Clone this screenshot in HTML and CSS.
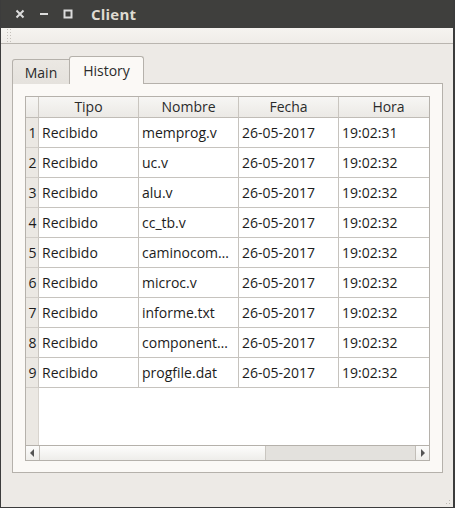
FILE: index.html
```html
<!DOCTYPE html>
<html>
<head>
<meta charset="utf-8">
<link rel="stylesheet" href="styles.css">
</head>
<body>
<div class="window">
  <div class="titlebar">
    <div class="wbtns">
      <svg class="wbtn" width="10" height="10" viewBox="0 0 10 10"><path d="M1.5 1.5 L8.5 8.5 M8.5 1.5 L1.5 8.5" stroke="#dcdcdc" stroke-width="2"/></svg>
      <svg class="wbtn" width="10" height="10" viewBox="0 0 10 10"><path d="M1 5 H9" stroke="#dcdcdc" stroke-width="2"/></svg>
      <svg class="wbtn" width="10" height="10" viewBox="0 0 10 10"><rect x="1.5" y="1.5" width="7" height="7" fill="none" stroke="#dcdcdc" stroke-width="2"/></svg>
    </div>
    <span class="wtitle">Client</span>
  </div>
  <div class="toolbar"><div class="grip"></div></div>
  <div class="content">
    <div class="tabbar">
      <div class="tab">Main</div>
      <div class="tab active">History</div>
    </div>
    <div class="panel">
      <div class="table">
        <div class="grid">
          <div class="corner"></div>
          <div class="hcell">Tipo</div>
          <div class="hcell">Nombre</div>
          <div class="hcell">Fecha</div>
          <div class="hcell">Hora</div>

          <div class="vcell">1</div><div class="cell">Recibido</div><div class="cell">memprog.v</div><div class="cell">26-05-2017</div><div class="cell">19:02:31</div>
          <div class="vcell">2</div><div class="cell">Recibido</div><div class="cell">uc.v</div><div class="cell">26-05-2017</div><div class="cell">19:02:32</div>
          <div class="vcell">3</div><div class="cell">Recibido</div><div class="cell">alu.v</div><div class="cell">26-05-2017</div><div class="cell">19:02:32</div>
          <div class="vcell">4</div><div class="cell">Recibido</div><div class="cell">cc_tb.v</div><div class="cell">26-05-2017</div><div class="cell">19:02:32</div>
          <div class="vcell">5</div><div class="cell">Recibido</div><div class="cell">caminocom…</div><div class="cell">26-05-2017</div><div class="cell">19:02:32</div>
          <div class="vcell">6</div><div class="cell">Recibido</div><div class="cell">microc.v</div><div class="cell">26-05-2017</div><div class="cell">19:02:32</div>
          <div class="vcell">7</div><div class="cell">Recibido</div><div class="cell">informe.txt</div><div class="cell">26-05-2017</div><div class="cell">19:02:32</div>
          <div class="vcell">8</div><div class="cell">Recibido</div><div class="cell">component…</div><div class="cell">26-05-2017</div><div class="cell">19:02:32</div>
          <div class="vcell">9</div><div class="cell">Recibido</div><div class="cell">progfile.dat</div><div class="cell">26-05-2017</div><div class="cell">19:02:32</div>
        </div>
        <div class="filler"><div class="vfill"></div></div>
        <div class="hscroll">
          <div class="sbtn"><span class="arrow left"></span></div>
          <div class="thumb"></div>
          <div class="trough"></div>
          <div class="sbtn rbtn"><span class="arrow right"></span></div>
        </div>
      </div>
    </div>
  </div>
  <div class="sizegrip"></div>
</div>
</body>
</html>
```

FILE: styles.css
```css
* { box-sizing: border-box; }
html, body { margin: 0; padding: 0; }
body {
  width: 455px;
  height: 508px;
  overflow: hidden;
  font-family: "Open Sans", "Noto Sans", sans-serif;
  font-size: 14px;
  color: #1c1c1c;
  background: #3c3c3c;
}
.window {
  position: relative;
  width: 455px;
  height: 508px;
  background: #edeae6;
  border-left: 1px solid #3c3c3c;
  border-right: 2px solid #3c3c3c;
  border-bottom: 1px solid #3c3c3c;
  display: flex;
  flex-direction: column;
}
.titlebar {
  height: 28px;
  background: #3f3f3d;
  display: flex;
  align-items: center;
  flex-shrink: 0;
}
.wbtns {
  display: flex;
  gap: 14px;
  padding-left: 14px;
  align-items: center;
}
.wbtn { display: block; }
.wtitle {
  margin-left: 18px;
  color: #dfdbd2;
  font-weight: bold;
  font-size: 15px;
  letter-spacing: 0.2px;
}
.toolbar {
  height: 16px;
  flex-shrink: 0;
  background: linear-gradient(#f6f4f0, #efece8);
  border-bottom: 1px solid #b9b5af;
  padding-left: 5px;
}
.grip {
  width: 5px;
  height: 15px;
  background-image: radial-gradient(circle, #c5c1bb 0.8px, transparent 1px);
  background-size: 3px 3px;
}
.content {
  padding: 12px 10px 0 11px;
  display: flex;
  flex-direction: column;
}
.tabbar {
  display: flex;
  align-items: flex-end;
  height: 28px;
  margin-bottom: -1px;
  position: relative;
  z-index: 1;
}
.tab {
  height: 25px;
  width: 58px;
  border: 1px solid #b5b1ab;
  border-bottom: none;
  border-radius: 3px 0 0 0;
  background: linear-gradient(#ebe8e3, #e5e2dd);
  color: #2b2b2b;
  display: flex;
  align-items: center;
  justify-content: center;
  padding-top: 1px;
}
.tab.active {
  height: 28px;
  width: 75px;
  margin-left: -1px;
  border-radius: 3px 3px 0 0;
  background: #fbf9f6;
  padding-top: 0;
  padding-bottom: 1px;
}
.panel {
  width: 431px;
  height: 390px;
  border: 1px solid #b5b1ab;
  background: #fbf9f6;
  padding: 12px 12px 0 12px;
}
.table {
  width: 405px;
  height: 365px;
  border: 1px solid #b5b1ab;
  background: #ffffff;
  display: flex;
  flex-direction: column;
  overflow: hidden;
}
.grid {
  display: grid;
  grid-template-columns: 13px 100px 100px 100px 100px;
  grid-auto-rows: 30px;
  grid-template-rows: 21px;
  width: 413px;
}
.corner, .hcell {
  background: linear-gradient(#f7f6f4, #ebe9e5);
  border-right: 1px solid #c9c5bf;
  border-bottom: 1px solid #c0bcb6;
}
.hcell {
  display: flex;
  align-items: center;
  justify-content: center;
  color: #2b2b2b;
  padding-bottom: 1px;
}
.vcell {
  background: #ebe8e3;
  border-right: 1px solid #c9c5bf;
  border-bottom: 1px solid #d2cec8;
  display: flex;
  align-items: center;
  justify-content: center;
  font-size: 14px;
  padding-left: 1px;
}
.cell {
  border-right: 1px solid #c6c3be;
  border-bottom: 1px solid #c6c3be;
  display: flex;
  align-items: center;
  padding-left: 3px;
  white-space: nowrap;
  overflow: hidden;
}
.filler {
  flex: 1;
  display: flex;
}
.vfill {
  width: 13px;
  background: #ebe8e3;
  border-right: 1px solid #d8d4ce;
}
.hscroll {
  height: 15px;
  border-top: 1px solid #b5b1ab;
  display: flex;
  flex-shrink: 0;
}
.sbtn {
  width: 14px;
  background: linear-gradient(#fbfbfa, #efeeeb);
  border-right: 1px solid #c2beb8;
  display: flex;
  align-items: center;
  justify-content: center;
}
.sbtn.rbtn {
  border-right: none;
  border-left: 1px solid #c2beb8;
}
.thumb {
  width: 225px;
  background: linear-gradient(#fdfdfc, #eeedea);
}
.trough {
  flex: 1;
  background: #e3e1dd;
  border-left: 1px solid #c9c6c0;
}
.arrow {
  width: 0;
  height: 0;
  border-top: 4px solid transparent;
  border-bottom: 4px solid transparent;
}
.arrow.left { border-right: 4px solid #555; margin-right: 2px; }
.arrow.right { border-left: 4px solid #555; margin-left: 1px; }
.sizegrip {
  position: absolute;
  right: 1px;
  bottom: 1px;
  width: 10px;
  height: 10px;
  background-image: radial-gradient(circle, #bdb9b3 0.8px, transparent 1px);
  background-size: 3px 3px;
  clip-path: polygon(100% 0, 100% 100%, 0 100%);
}
```
